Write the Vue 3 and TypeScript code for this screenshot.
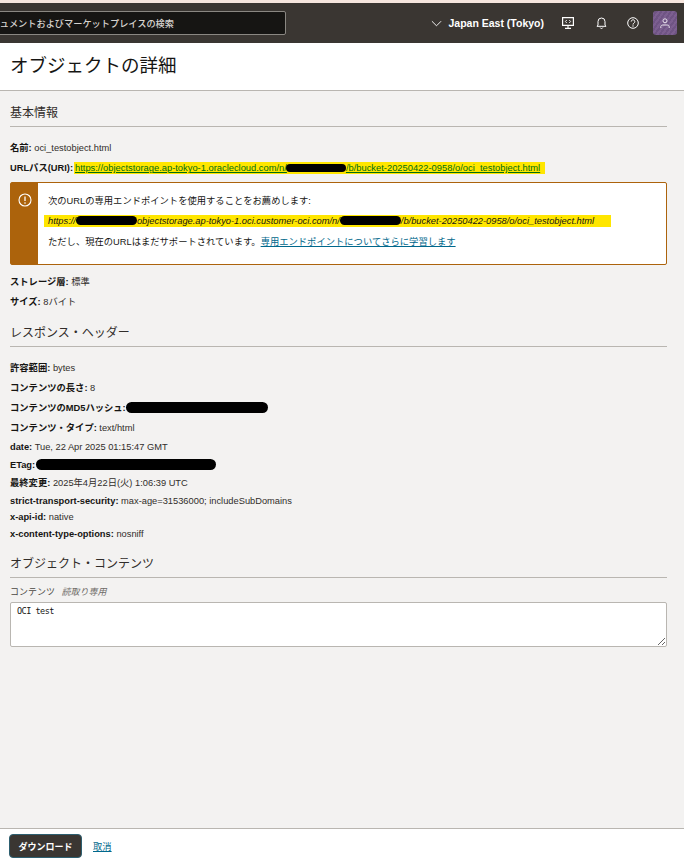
<script setup lang="ts">
interface Row {
  label: string;
  value?: string;
  blob?: number;
  blobShift?: number;
  kind?: 'tall' | 'short';
}

const basicRows: Row[] = [
  { label: 'ストレージ層', value: '標準', kind: 'tall' },
  { label: 'サイズ', value: '8バイト', kind: 'tall' },
];

const headerRows: Row[] = [
  { label: '許容範囲', value: 'bytes', kind: 'tall' },
  { label: 'コンテンツの長さ', value: '8', kind: 'tall' },
  { label: 'コンテンツのMD5ハッシュ', blob: 142, blobShift: -2, kind: 'tall' },
  { label: 'コンテンツ・タイプ', value: 'text/html', kind: 'tall' },
  { label: 'date', value: 'Tue, 22 Apr 2025 01:15:47 GMT' },
  { label: 'ETag', blob: 180, blobShift: -2 },
  { label: '最終変更', value: '2025年4月22日(火) 1:06:39 UTC' },
  { label: 'strict-transport-security', value: 'max-age=31536000; includeSubDomains' },
  { label: 'x-api-id', value: 'native', kind: 'short' },
  { label: 'x-content-type-options', value: 'nosniff', kind: 'short' },
];
</script>

<template>
  <div class="page">
    <header class="topbar">
      <div class="search">ドキュメントおよびマーケットプレイスの検索</div>
      <div class="topbar-right">
        <svg class="chev" width="11" height="11" viewBox="0 0 12 12">
          <path d="M1 3.500 6 8.500 11 3.500" fill="none" stroke="#fff" stroke-width="1" />
        </svg>
        <span class="region">Japan East (Tokyo)</span>
        <svg class="ico ico-dev" width="12" height="12" viewBox="0 0 12 12">
          <path d="M.6.600h10.800v7.800H.6z" fill="none" stroke="#fff" stroke-width="1.200" />
          <path d="M6 8.500v2.800M3 11.400h6" fill="none" stroke="#fff" stroke-width="1.100" />
          <path d="M4.800 3 3.400 4.500 4.800 6M7.200 3l1.400 1.500L7.200 6" fill="none" stroke="#fff" stroke-width=".9" />
        </svg>
        <svg class="ico ico-bell" width="11" height="12" viewBox="0 0 11 12">
          <path d="M2 8.300V4.500a3.500 3.500 0 0 1 7 0v3.800l1.100 1H.9z" fill="none" stroke="#fff" stroke-width="1" />
          <path d="M4.200 10.600a1.400 1.400 0 0 0 2.600 0" fill="none" stroke="#fff" stroke-width="1" />
        </svg>
        <svg class="ico ico-help" width="12" height="12" viewBox="0 0 12 12">
          <circle cx="6" cy="6" r="5.300" fill="none" stroke="#fff" stroke-width="1" />
          <path d="M4.200 4.600a1.800 1.800 0 1 1 2.800 1.500c-.7.400-1 .8-1 1.500" fill="none" stroke="#fff" stroke-width="1" />
          <circle cx="6" cy="9" r=".7" fill="#fff" />
        </svg>
        <div class="avatar">
          <svg width="10" height="11" viewBox="0 0 10 11">
            <circle cx="5" cy="2.800" r="2" fill="none" stroke="#e8e2ec" stroke-width="1" />
            <path d="M.8 10V8.600c0-1 .9-1.600 2-1.600h4.400c1.100 0 2 .6 2 1.600V10" fill="none" stroke="#e8e2ec" stroke-width="1" />
          </svg>
        </div>
      </div>
    </header>

    <div class="titlebar">
      <h1>オブジェクトの詳細</h1>
    </div>

    <main class="content">
      <h2 class="first">基本情報</h2>
      <div class="row tall"><b>名前:</b> oci_testobject.html</div>
      <div class="row tall">
        <b>URLパス(URI):</b>
        <span class="mark uri-mark">
          <a class="uri-link">https://objectstorage.ap-tokyo-1.oraclecloud.com/n/</a><span class="blob uri-blob" /><a class="uri-link">/b/bucket-20250422-0958/o/oci_testobject.html</a>
        </span>
      </div>

      <div class="alert">
        <div class="alert-side">
          <svg width="14" height="14" viewBox="0 0 14 14">
            <circle cx="7" cy="7" r="6" fill="none" stroke="#fff" stroke-width="1.100" />
            <path d="M7 3.500v4.500" stroke="#fff" stroke-width="1.300" />
            <circle cx="7" cy="10" r=".8" fill="#fff" />
          </svg>
        </div>
        <div class="alert-body">
          <p>次のURLの専用エンドポイントを使用することをお薦めします:</p>
          <p class="endpoint">
            <i class="mark end-mark">https://<span class="blob end-blob" />objectstorage.ap-tokyo-1.oci.customer-oci.com/n/<span class="blob end-blob" />/b/bucket-20250422-0958/o/oci_testobject.html</i>
          </p>
          <p class="note">ただし、現在のURLはまだサポートされています。<a class="link">専用エンドポイントについてさらに学習します</a></p>
        </div>
      </div>

      <div v-for="r in basicRows" :key="r.label" class="row" :class="r.kind">
        <b>{{ r.label }}:</b> {{ r.value }}
      </div>

      <h2>レスポンス・ヘッダー</h2>
      <div v-for="r in headerRows" :key="r.label" class="row" :class="r.kind">
        <b>{{ r.label }}:</b> {{ r.value }}<span
          v-if="r.blob"
          class="blob row-blob"
          :style="{ width: r.blob + 'px', marginLeft: r.blobShift + 'px' }"
        />
      </div>

      <h2>オブジェクト・コンテンツ</h2>
      <label class="field-label">コンテンツ <i>読取り専用</i></label>
      <textarea class="area" readonly value="OCI test" />
    </main>

    <footer class="footer">
      <button class="btn">ダウンロード</button>
      <a class="link cancel">取消</a>
    </footer>
  </div>
</template>

<style>
  html,
  body {
    margin: 0;
    overflow: hidden;
  }
</style>

<style scoped>
  .page {
    width: 684px;
    height: 864px;
    display: flex;
    flex-direction: column;
    font-family: 'Liberation Sans', 'Noto Sans CJK JP', sans-serif;
    font-size: 9.300px;
    color: #161513;
    background: #f3f2f1;
    border-top: 3px solid #f6e6de;
    box-sizing: border-box;
    overflow: hidden;
  }
  .topbar {
    height: 40px;
    flex-shrink: 0;
    display: flex;
    align-items: center;
    justify-content: space-between;
    background: #3a3632;
  }
  .search {
    width: 306px;
    height: 24px;
    margin-left: -20px;
    box-sizing: border-box;
    display: flex;
    align-items: center;
    justify-content: flex-end;
    padding-right: 111px;
    white-space: nowrap;
    font-size: 9.200px;
    font-weight: 500;
    color: #d6d3cf;
    background: #161513;
    border: 1px solid #8a8782;
    border-radius: 2px;
    overflow: hidden;
  }
  .topbar-right {
    display: flex;
    align-items: center;
    padding-right: 7px;
    color: #fff;
  }
  .region {
    margin-left: 7px;
    font-size: 10.500px;
    font-weight: 700;
  }
  .ico-dev {
    margin-left: 18px;
  }
  .ico-bell {
    margin-left: 22px;
  }
  .ico-help {
    margin-left: 20px;
  }
  .avatar {
    width: 24px;
    height: 24px;
    margin-left: 14px;
    display: flex;
    align-items: center;
    justify-content: center;
    border-radius: 3px;
    background: repeating-linear-gradient(125deg, #7c5f90 0 2px, #6f5484 2px 4px);
  }
  .titlebar {
    height: 48px;
    flex-shrink: 0;
    display: flex;
    align-items: center;
    padding: 0 0 2px 10px;
    box-sizing: border-box;
    background: #fff;
    border-bottom: 1px solid #b9b6b1;
  }
  h1 {
    margin: 0;
    font-size: 18.500px;
    font-weight: 400;
    line-height: 24px;
  }
  .content {
    flex: 1;
    padding: 0 17px 0 10px;
  }
  h2 {
    margin: 8.400px 0 10px;
    height: 26px;
    line-height: 26px;
    font-size: 12px;
    font-weight: 400;
    color: #312d2a;
    border-bottom: 1px solid #b9b6b1;
    box-sizing: content-box;
  }
  h2.first {
    margin-top: 9px;
  }
  .row {
    height: 18px;
    line-height: 20px;
    white-space: nowrap;
    color: #312d2a;
  }
  .row.tall {
    height: 20.200px;
    line-height: 22px;
  }
  .row.short {
    height: 16.500px;
    line-height: 17px;
  }
  b {
    font-weight: 700;
    color: #161513;
  }
  .mark {
    display: inline-block;
    height: 12px;
    line-height: 12px;
    background: #ffe600;
  }
  .uri-mark {
    margin-left: 1px;
    padding: 0 5px 0 1px;
  }
  .uri-link {
    font-size: 9.360px;
    color: #006d10;
    text-decoration: underline;
  }
  .blob {
    display: inline-block;
    background: #000;
    border-radius: 6px;
  }
  .row-blob {
    height: 11px;
    vertical-align: -2px;
  }
  .uri-blob {
    width: 60px;
    height: 8px;
    vertical-align: -1px;
    margin-left: -1px;
  }
  .alert {
    height: 83px;
    margin: 4.600px 0 6px;
    display: flex;
    box-sizing: border-box;
    background: #fff;
    border: 1px solid #ac630c;
    border-radius: 2px;
  }
  .alert-side {
    width: 27px;
    flex-shrink: 0;
    display: flex;
    justify-content: center;
    padding-top: 10px;
    box-sizing: border-box;
    background: #ac630c;
  }
  .alert-body {
    padding-top: 8px;
    padding-left: 10px;
  }
  .alert-body p {
    margin: 0;
    height: 20px;
    line-height: 20px;
    white-space: nowrap;
  }
  .alert-body .endpoint {
    margin-left: -4px;
    display: flex;
    align-items: center;
  }
  .alert-body .note {
    margin-top: 1px;
  }
  .end-mark {
    padding: 0 17px 0 4px;
    height: 12px;
    line-height: 12px;
  }
  .end-blob {
    width: 61px;
    height: 9px;
    vertical-align: -1px;
  }
  .link {
    color: #00688c;
    text-decoration: underline;
  }
  .field-label {
    display: block;
    height: 17px;
    margin-top: -3px;
    line-height: 14px;
    font-size: 9px;
    color: #4a4743;
  }
  .field-label i {
    color: #6f6c68;
    margin-left: 4px;
  }
  .area {
    display: block;
    width: 100%;
    height: 45px;
    box-sizing: border-box;
    padding: 3px 6px;
    font-family: 'DejaVu Sans Mono', monospace;
    font-size: 8.500px;
    letter-spacing: -0.5px;
    color: #161513;
    background: #fff;
    border: 1px solid #b9b6b1;
    border-radius: 2px;
    outline: none;
  }
  .footer {
    height: 36px;
    flex-shrink: 0;
    display: flex;
    align-items: center;
    padding: 0 0 1px 9px;
    box-sizing: border-box;
    background: #fff;
    border-top: 1px solid #b9b6b1;
  }
  .btn {
    width: 73px;
    height: 24px;
    padding: 0;
    font-family: inherit;
    font-size: 9px;
    font-weight: 700;
    color: #fff;
    background: #3a3632;
    border: 1px solid #2d5f70;
    border-radius: 4px;
  }
  .cancel {
    margin-left: 11px;
  }
</style>
